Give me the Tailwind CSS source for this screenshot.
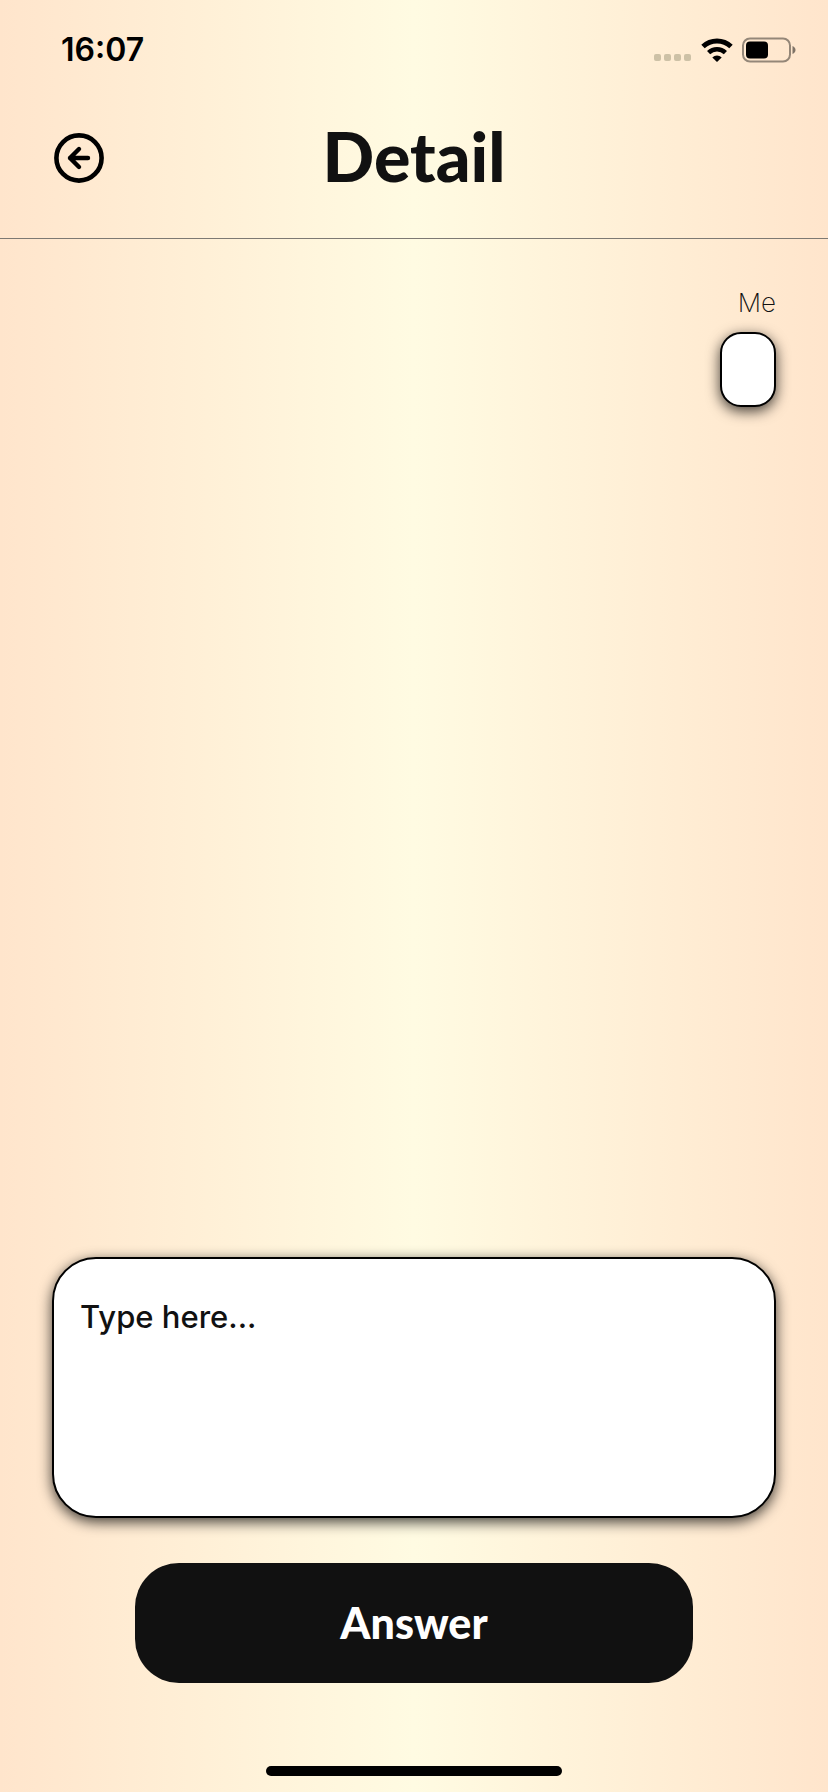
<!DOCTYPE html>
<html lang="en">
<head>
  <meta charset="UTF-8">
  <meta name="viewport" content="width=device-width, initial-scale=1.0">
  <title>Detail</title>
  <script src="https://cdn.jsdelivr.net/npm/@tailwindcss/browser@4"></script>
</head>

<body class="flex flex-col min-h-screen bg-linear-to-r/srgb from-[#ffe5cc] via-[#fffbe2] to-[#ffe5cc] font-['Inter',sans-serif] text-[#111111]">
  <!-- Status bar -->
  <div class="flex h-[100px] items-center justify-between pl-[61px] pr-8 text-black">
    <span class="text-[32px] font-semibold leading-10">16:07</span>
    <div class="flex items-center gap-[9px]">
      <svg class="mt-4 h-2 w-[38px]" viewBox="0 0 38 8" fill="#cdc1a6" aria-hidden="true">
        <rect x="0" y="0" width="7" height="7" rx="2" />
        <rect x="10" y="0" width="7" height="7" rx="2" />
        <rect x="20" y="0" width="7" height="7" rx="2" />
        <rect x="30" y="0" width="7" height="7" rx="2" />
      </svg>
      <svg class="h-6 w-8" viewBox="0 0 32 24" fill="none" stroke="#000" aria-hidden="true">
        <path d="M2 8.5a20.5 20.5 0 0 1 28 0" stroke-width="5" />
        <path d="M7.6 14.6a12.3 12.3 0 0 1 16.8 0" stroke-width="4.6" />
        <path d="M16 24l-4.700-4.600a7 7 0 0 1 9.400 0z" fill="#000" stroke="none" />
      </svg>
      <svg class="h-[26px] w-[54px]" viewBox="0 0 54 26" aria-hidden="true">
        <rect x="1" y="1.500" width="47" height="23" rx="7" fill="none" stroke="#000" stroke-opacity=".42" stroke-width="2" />
        <rect x="4" y="4.500" width="22" height="17" rx="4" fill="#000" />
        <path d="M50.500 9c4 1.500 4 6.500 0 8z" fill="#000" fill-opacity=".5" />
      </svg>
    </div>
  </div>

  <header class="grid h-[139px] grid-cols-[1fr_auto_1fr] items-start border-b border-[#7d7973] px-[52px]">
    <button type="button" aria-label="Back" class="mt-8 h-[54px] w-[54px]">
      <svg class="h-[54px] w-[54px]" viewBox="0 0 54 54" fill="none" stroke="#000" stroke-linecap="round" stroke-linejoin="round" aria-hidden="true">
        <circle cx="27" cy="26" r="22.600" stroke-width="4.600" />
        <path d="M36 26H18M27 17l-9 9 9 9" stroke-width="4.400" />
      </svg>
    </button>
    <h1 class="mt-4 font-['Lato',sans-serif] text-[68px] font-black leading-20">Detail</h1>
  </header>

  <main class="flex flex-1 flex-col px-[52px]">
    <div class="flex flex-1 flex-col items-end pt-[46px]">
      <p class="text-[26px] font-extralight leading-9">Me</p>
      <div class="mt-[11px] h-[75px] w-14 rounded-[21px] border-2 border-black bg-white shadow-[0_4px_14px_rgba(0,0,0,0.75)]"></div>
    </div>

    <form class="flex flex-col items-center pb-[83px]">
      <textarea aria-label="Your answer" placeholder="Type here..." class="h-[261px] w-full resize-none rounded-[44px] border-2 border-black bg-white px-[26px] py-9 font-['Inter',sans-serif] text-[31px] font-medium leading-11 placeholder:text-[#111111] placeholder:opacity-100 shadow-[0_4px_14px_rgba(0,0,0,0.75)] outline-none"></textarea>
      <button type="button" class="mt-[45px] h-[120px] w-full max-w-[558px] rounded-[44px] bg-[#111111] font-['Lato',sans-serif] text-[43px] font-black leading-12 text-white">Answer</button>
    </form>
  </main>

  <!-- Home indicator -->
  <div class="mx-auto mb-4 h-[10px] w-[296px] rounded-full bg-black"></div>
</body>
</html>
